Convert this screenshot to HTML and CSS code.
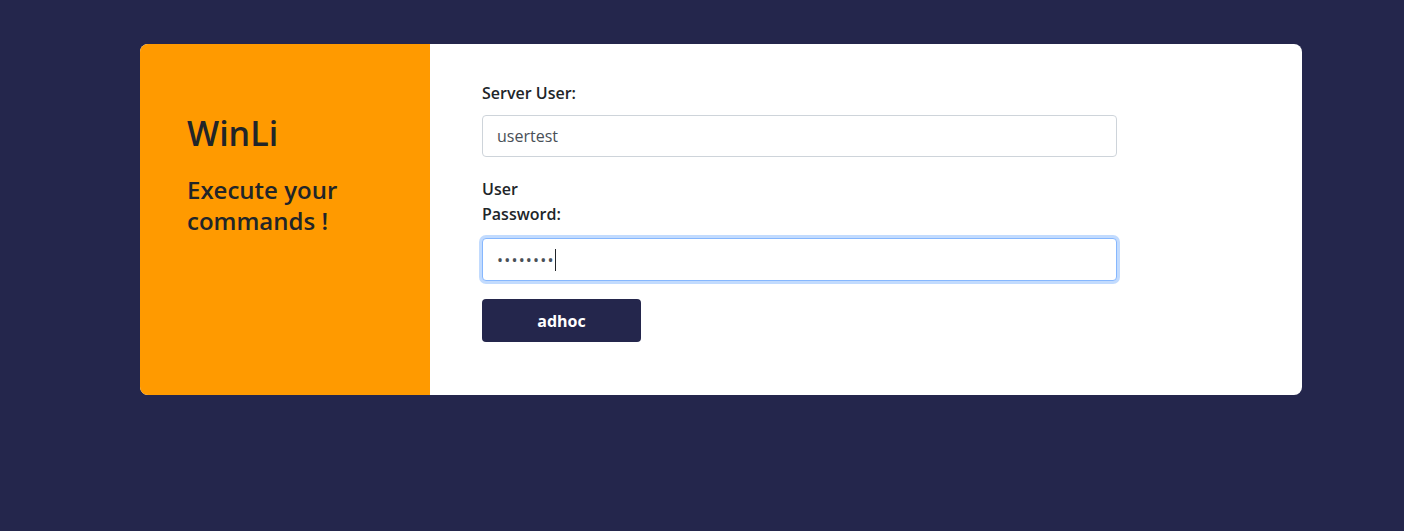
FILE: index.html
```html
<!DOCTYPE html>
<html lang="en">
<head>
<meta charset="utf-8">
<title>WinLi</title>
<link rel="stylesheet" href="styles.css">
</head>
<body>
<div class="card">
  <div class="brand">
    <h1 class="brand-title">WinLi</h1>
    <h2 class="brand-sub">Execute your commands !</h2>
  </div>
  <form class="form">
    <label class="label" for="user">Server User:</label>
    <input class="input" id="user" type="text" value="usertest">
    <label class="label label-narrow" for="pw">User Password:</label>
    <div class="input input-focus">
      <span class="dots">••••••••</span><span class="caret"></span>
    </div>
    <button class="btn" type="button">adhoc</button>
  </form>
</div>
</body>
</html>
```

FILE: styles.css
```css
* { box-sizing: border-box; }
html, body { margin: 0; padding: 0; }
body {
  background: #24264c;
  font-family: "Open Sans", "Noto Sans", sans-serif;
  color: #212529;
  height: 531px;
}
.card {
  margin: 44px 0 0 140px;
  width: 1162px;
  height: 351px;
  display: flex;
  border-radius: 8px;
  overflow: hidden;
  background: #fff;
}
.brand {
  width: 290px;
  flex: none;
  background: #ff9a00;
  padding: 69px 40px 0 47px;
}
.brand-title {
  margin: 0 0 20px;
  font-size: 34px;
  font-weight: 600;
  line-height: 1.2;
}
.brand-sub {
  margin: 0;
  font-size: 24px;
  font-weight: 600;
  line-height: 31px;
}
.form {
  padding: 37px 0 0 52px;
  display: flex;
  flex-direction: column;
  align-items: flex-start;
}
.label {
  font-size: 16px;
  font-weight: 600;
  line-height: 25px;
  margin-bottom: 9px;
}
.label-narrow { width: 95px; margin-top: 20px; margin-bottom: 11px; }
.input {
  width: 635px;
  height: 42px;
  border: 1px solid #ced4da;
  border-radius: 4px;
  padding: 0 14px;
  font-family: inherit;
  font-size: 16px;
  color: #495057;
  background: #fff;
  outline: none;
}
.input-focus {
  height: 43px;
  border-color: #86b7fe;
  box-shadow: 0 0 0 3px rgba(13, 110, 253, 0.25);
  display: flex;
  align-items: center;
}
.dots {
  font-size: 16px;
  letter-spacing: 1.2px;
  color: #495057;
}
.caret {
  width: 1px;
  height: 22px;
  background: #212529;
  margin-left: 0;
}
.btn {
  margin-top: 18px;
  width: 159px;
  height: 43px;
  border: none;
  border-radius: 4px;
  background: #24264c;
  color: #fff;
  font-family: inherit;
  font-size: 16px;
  font-weight: 700;
}
```
